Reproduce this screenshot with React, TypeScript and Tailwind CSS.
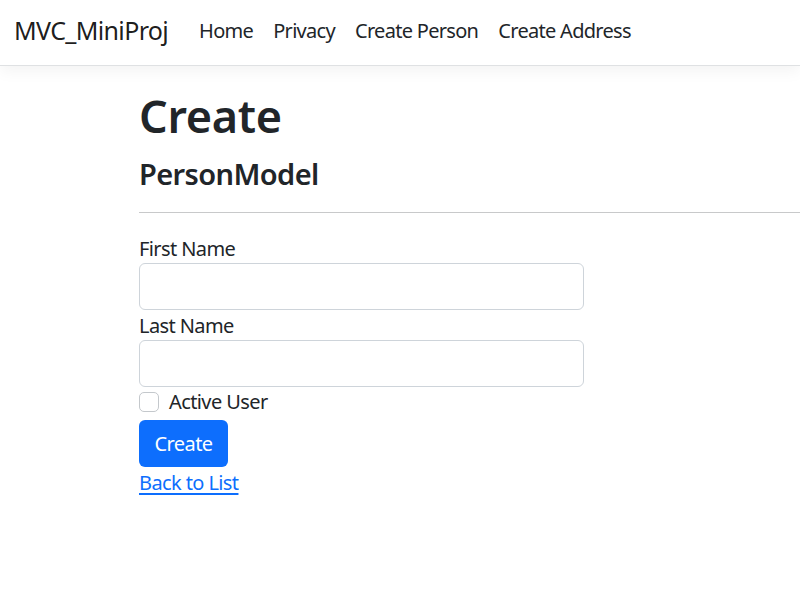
export default function App() {
  return (
    <div className="min-h-[611px] bg-white font-['Noto_Sans',sans-serif] text-[#212529]">
      <nav className="relative z-10 flex h-[66px] items-center border-b border-[#dfe1e3] bg-white px-[14px] pb-[4px] shadow-[0_5px_15px_rgba(0,0,0,0.05)]">
        <a className="mr-[21px] text-[25px] leading-[1.5] tracking-[-0.65px] text-black/90">MVC_MiniProj</a>
        <ul className="flex text-[20px] leading-[1.5] tracking-[-0.7px] text-[#212529]">
          <li className="px-[10px]">Home</li>
          <li className="px-[10px]">Privacy</li>
          <li className="px-[10px]">Create Person</li>
          <li className="px-[10px]">Create Address</li>
        </ul>
      </nav>
      <main className="pl-[139px]">
        <h1 className="mt-[23px] text-[45px] font-semibold leading-[1.2] tracking-[-0.3px]">Create</h1>
        <h2 className="mt-[14px] text-[29px] font-semibold leading-[1.2] tracking-[-0.6px]">PersonModel</h2>
        <hr className="mt-[20px] border-t border-[#c8c9ca]" />
        <form className="mt-[20px] flex w-[445px] flex-col text-[20px] leading-[30px] tracking-[-0.6px]">
          <label className="pt-[1px]">First Name</label>
          <input className="-mt-[1px] h-[47px] w-full rounded-[6px] border border-[#ced4da] bg-white px-[15px] outline-none" />
          <label className="pt-[1px]">Last Name</label>
          <input className="-mt-[1px] h-[47px] w-full rounded-[6px] border border-[#ced4da] bg-white px-[15px] outline-none" />
          <div className="mb-[3px] flex h-[30px] items-center">
            <span className="mt-[1px] h-[20px] w-[20px] rounded-[5px] border border-[#c4c8cc] bg-white" />
            <span className="ml-[10px] pt-[1px]">Active User</span>
          </div>
          <div>
            <button
              type="button"
              className="flex h-[47px] w-[89px] items-center justify-center rounded-[6px] bg-[#0d6efd] pt-[1px] text-white"
            >
              Create
            </button>
          </div>
        </form>
        <div className="pt-[1px] text-[20px] leading-[30px] tracking-[-0.6px]">
          <a className="text-[#0d6efd] underline underline-offset-[3px]">Back to List</a>
        </div>
      </main>
    </div>
  );
}
